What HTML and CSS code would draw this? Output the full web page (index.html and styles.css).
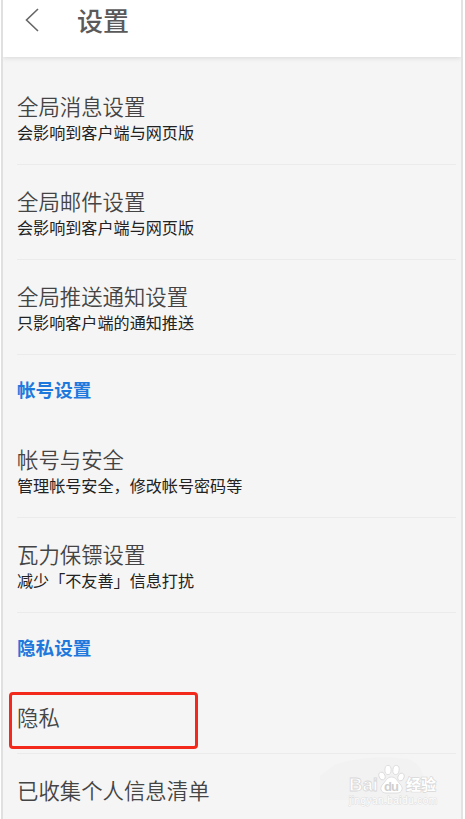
FILE: index.html
```html
<!DOCTYPE html>
<html lang="zh-CN">
<head>
  <meta charset="UTF-8">
  <meta name="viewport" content="width=device-width, initial-scale=1.0">
  <title>设置</title>
  <link rel="stylesheet" href="styles.css">
</head>
<body>

<div class="screen">
  <header class="topbar">
    <svg class="back" width="14" height="24" viewBox="0 0 14 24">
      <path d="M13 1 L1.5 12 L13 23" />
    </svg>
    <h1>设置</h1>
  </header>

  <main class="settings">
    <div class="item">
      <div class="title">全局消息设置</div>
      <div class="desc">会影响到客户端与网页版</div>
    </div>
    <div class="item">
      <div class="title">全局邮件设置</div>
      <div class="desc">会影响到客户端与网页版</div>
    </div>
    <div class="item">
      <div class="title">全局推送通知设置</div>
      <div class="desc">只影响客户端的通知推送</div>
    </div>

    <h2>帐号设置</h2>
    <div class="item">
      <div class="title">帐号与安全</div>
      <div class="desc">管理帐号安全，修改帐号密码等</div>
    </div>
    <div class="item">
      <div class="title">瓦力保镖设置</div>
      <div class="desc">减少「不友善」信息打扰</div>
    </div>

    <h2>隐私设置</h2>
    <div class="item single marked">
      <div class="title">隐私</div>
    </div>
    <div class="item single">
      <div class="title">已收集个人信息清单</div>
    </div>
  </main>

  <!-- watermark -->
  <svg class="watermark" width="130" height="60" viewBox="0 0 130 60">
    <path class="haze" d="M0 46 V22 L16 10 Q50 0 88 5 Q106 10 108 46 Z" />
    <text class="brand" x="29" y="37" textLength="29" lengthAdjust="spacingAndGlyphs">Bai</text>
    <g class="paw">
      <ellipse cx="62" cy="22" rx="3" ry="4" transform="rotate(-20 62 22)" />
      <ellipse cx="68" cy="16" rx="3.1" ry="4.6" />
      <ellipse cx="76" cy="16" rx="3.1" ry="4.6" transform="rotate(8 76 16)" />
      <ellipse cx="81" cy="23" rx="3" ry="4" transform="rotate(20 81 23)" />
      <path d="M71.500 23 C76 23 77 27 80 30 C84 34 82 39 77 39 H66 C61 39 59 34 63 30 C66 27 67 23 71.500 23 Z" />
    </g>
    <text class="du" x="64" y="37" textLength="15">du</text>
    <text class="brand cn" x="86" y="36" textLength="30">经验</text>
    <text class="url" x="29" y="50" textLength="88">jingyan.baidu.com</text>
  </svg>
</div>

</body>
</html>
```
FILE: styles.css
```css
* {
  box-sizing: border-box;
}

body {
  margin: 0;
  background: #fff;
  font-family: "Noto Sans CJK SC", sans-serif;
}

.screen {
  position: relative;
  width: 462px;
  height: 819px;
  margin-left: 1px;
  border-left: 2px solid #e0e0e0;
  border-right: 2px solid #e3e3e3;
  background: #f5f5f5;
  overflow: hidden;
}

.topbar {
  display: flex;
  align-items: center;
  height: 57px;
  padding: 0 22px 17px;
  background: #fff;
  box-shadow: 0 1px 5px rgba(0, 0, 0, 0.12);
}

.back {
  fill: none;
  stroke: #666;
  stroke-width: 1.6;
}

h1 {
  margin: 0 0 0 38px;
  font-size: 26px;
  line-height: 38px;
  font-weight: 500;
  color: #5a5a5a;
}

.settings {
  padding: 13px 5px 0 14px;
}

.item {
  height: 95px;
  padding-top: 20px;
  border-bottom: 1px solid #ebebeb;
}

.title {
  margin-bottom: 1px;
  font-size: 21.4px;
  line-height: 31px;
  font-weight: 350;
  color: #444;
}

.desc {
  font-size: 16.1px;
  line-height: 20px;
  color: #222;
}

h2 {
  height: 68px;
  margin: 0;
  padding-top: 20px;
  font-size: 18.6px;
  line-height: 28px;
  font-weight: 700;
  color: #1f78dc;
}

.single {
  height: 73px;
}

/* red frame around the privacy entry */
.marked {
  position: relative;
}

.marked::after {
  content: "";
  position: absolute;
  box-sizing: border-box;
  left: -8px;
  top: 11px;
  width: 189px;
  height: 57px;
  border: 3px solid #f3291c;
  border-radius: 4px;
}

.watermark {
  position: absolute;
  left: 317px;
  top: 754px;
}

.haze {
  fill: #f2f2f2;
}

.brand {
  font: bold 19px "Liberation Sans", sans-serif;
  fill: #fff;
  stroke: #d8d8d8;
  stroke-width: 0.8;
}

.cn {
  font: 700 15px "Noto Sans CJK SC", sans-serif;
  stroke-width: 1.4;
  paint-order: stroke;
}

.paw {
  fill: #fff;
  stroke: #d8d8d8;
  stroke-width: 0.8;
}

.du {
  font: bold 13px "Liberation Sans", sans-serif;
  fill: #d0d0d0;
}

.url {
  font: 10px "Liberation Sans", sans-serif;
  fill: #fff;
  stroke: #dedede;
  stroke-width: 1;
  paint-order: stroke;
}
```
